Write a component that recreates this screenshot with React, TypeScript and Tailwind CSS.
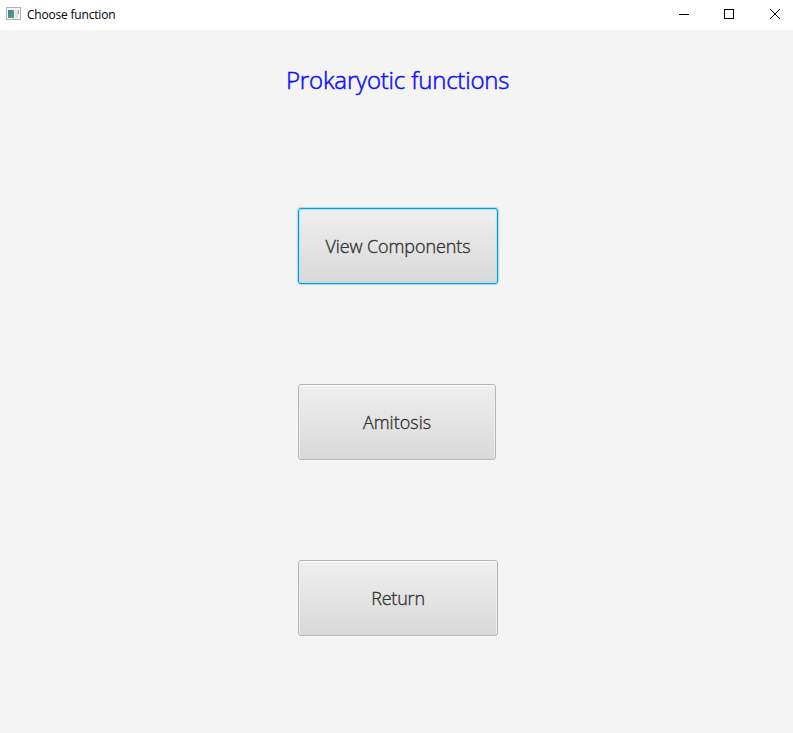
import React from "react";

type FunctionButtonProps = { label: string; focused?: boolean; className: string };

function FunctionButton({ label, focused, className }: FunctionButtonProps) {
  const ring = focused
    ? "border-[#039ed3] shadow-[0_0_2px_#039ed3,inset_0_0_1px_1px_#b4dfee]"
    : "border-[#b5b5b5] shadow-[0_1px_0_#fafafa,inset_0_1px_0_#fcfcfc,inset_1px_0_0_#ededed,inset_-1px_0_0_#ededed]";
  return (
    <button
      className={`flex h-[76px] items-center justify-center rounded-[3px] border bg-linear-to-b from-[#efefef] to-[#d9d9d9] text-[18px] leading-7 font-light whitespace-nowrap text-[#333333] [-webkit-text-stroke:0.35px_#333333] ${className} ${ring}`}
    >
      {label}
    </button>
  );
}

export default function App() {
  return (
    <div className="flex h-[733px] w-[793px] flex-col overflow-hidden bg-[#f4f4f4] font-['Open_Sans','Noto_Sans',sans-serif]">
      <header className="flex h-[30px] shrink-0 items-center bg-white">
        <svg width="16" height="16" viewBox="0 0 16 16" className="ml-1.5 -mt-0.5" shapeRendering="crispEdges">
          <defs>
            <linearGradient id="pane" x1="0" y1="0" x2="1" y2="1">
              <stop offset="0" stopColor="#4779a0" />
              <stop offset="1" stopColor="#56a678" />
            </linearGradient>
          </defs>
          <rect x="0.5" y="1.5" width="14" height="12" fill="#f6f6f6" stroke="#b0b4b8" />
          <rect x="2" y="4" width="6" height="8" fill="url(#pane)" />
          <rect x="9" y="4" width="3" height="8" fill="#e0e5e8" />
          <rect x="12" y="4" width="1" height="4" fill="#7fa5ae" />
        </svg>
        <span className="ml-[5px] text-[12px] leading-4 tracking-[-0.2px] text-black">Choose function</span>
        <svg width="133" height="30" className="ml-auto" fill="none" stroke="#000" shapeRendering="crispEdges">
          <path d="M19 14.5h10M64.5 9.5h9v9h-9z" />
          <path d="M110 9l10 10M120 9l-10 10" shapeRendering="auto" />
        </svg>
      </header>
      <main className="flex flex-col">
        <h1 className="ml-[286px] mt-8 h-9 text-[24px] leading-9 font-light tracking-[-0.18px] text-[#0d0dff] [-webkit-text-stroke:0.5px_#0d0dff]">
          Prokaryotic functions
        </h1>
        <div className="ml-[298px] mt-[110px] flex flex-col gap-[100px]">
          <FunctionButton label="View Components" focused className="w-[200px] tracking-[-0.1px]" />
          <FunctionButton label="Amitosis" className="w-[198px]" />
          <FunctionButton label="Return" className="w-[200px] tracking-[-0.2px]" />
        </div>
      </main>
    </div>
  );
}
